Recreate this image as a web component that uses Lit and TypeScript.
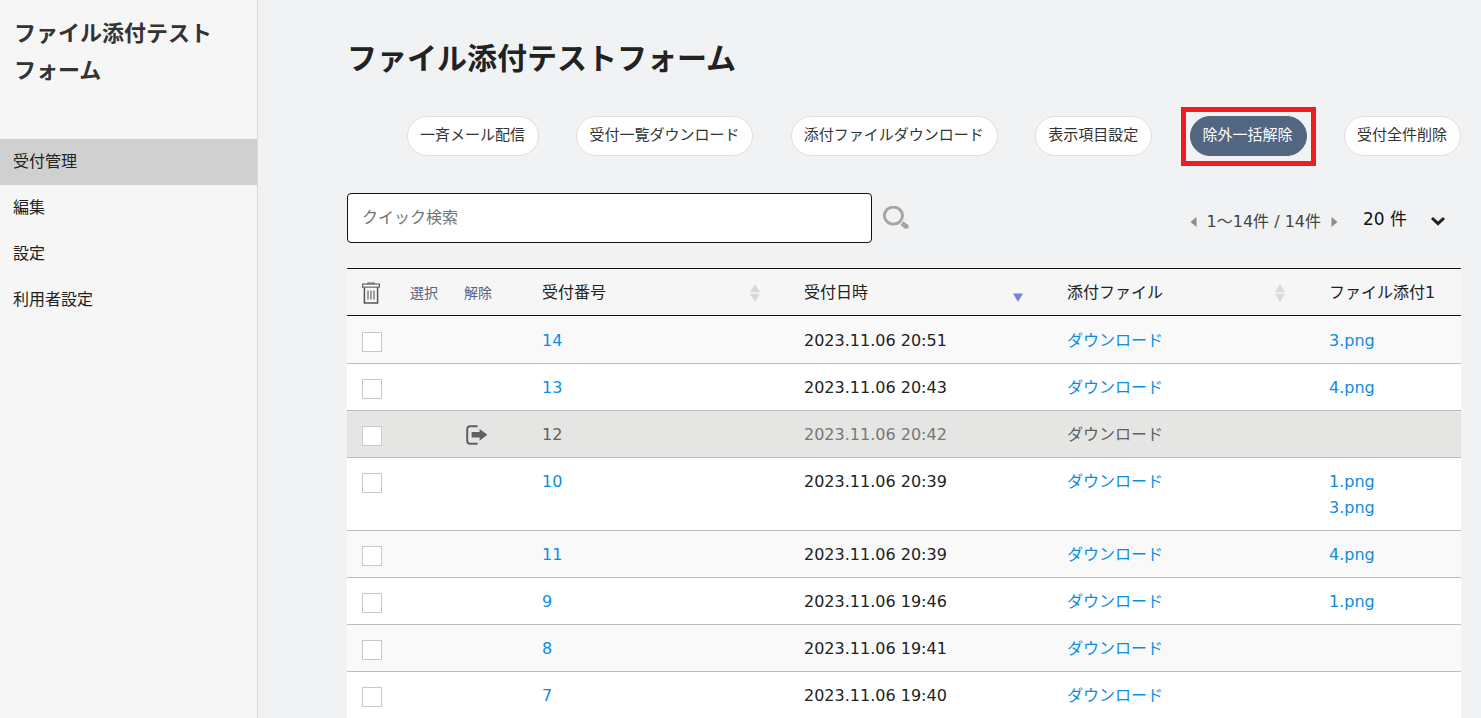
import { LitElement, html, css, svg } from "lit";
import { customElement } from "lit/decorators.js";
import { classMap } from "lit/directives/class-map.js";

interface Entry {
  id: number;
  date: string;
  files: string[];
  excluded?: boolean;
  shaded?: boolean;
}

const ENTRIES: Entry[] = [
  { id: 14, date: "2023.11.06 20:51", files: ["3.png"], shaded: true },
  { id: 13, date: "2023.11.06 20:43", files: ["4.png"] },
  { id: 12, date: "2023.11.06 20:42", files: [], excluded: true },
  { id: 10, date: "2023.11.06 20:39", files: ["1.png", "3.png"] },
  { id: 11, date: "2023.11.06 20:39", files: ["4.png"], shaded: true },
  { id: 9, date: "2023.11.06 19:46", files: ["1.png"] },
  { id: 8, date: "2023.11.06 19:41", files: [], shaded: true },
  { id: 7, date: "2023.11.06 19:40", files: [] },
];

const MENU = ["受付管理", "編集", "設定", "利用者設定"];

const ACTIONS = [
  "一斉メール配信",
  "受付一覧ダウンロード",
  "添付ファイルダウンロード",
  "表示項目設定",
  "除外一括解除",
  "受付全件削除",
];

const trashIcon = html`<svg width="18" height="22" viewBox="0 0 18 22" fill="none" stroke="#555">
  <path d="M6 2.2V1h6v1.2" stroke-width="1.2" />
  <rect x="0.6" y="2.1" width="16.8" height="3" fill="#fff" stroke-width="1.1" />
  <path d="M2.4 5.2V20.9h13.2V5.2" stroke-width="1.5" />
  <path d="M6 8.5v9M9 8.5v9M12 8.5v9" stroke-width="1.1" />
</svg>`;

const searchIcon = html`<svg width="28" height="24" viewBox="0 0 28 24" fill="none" stroke="#a5a5a5">
  <ellipse cx="11.4" cy="9.6" rx="9.1" ry="8.5" stroke-width="2.9" />
  <path d="M20 17l4 3.6" stroke-width="4.8" />
  <circle cx="24.3" cy="20.4" r="2.4" fill="#a5a5a5" stroke="none" />
</svg>`;

const releaseIcon = html`<svg width="22" height="20" viewBox="0 0 22 20">
  <path d="M11.6 1.2H4.2Q1.2 1.2 1.2 4.2V15.8Q1.2 18.8 4.2 18.8H11.6" fill="none" stroke="#606060" stroke-width="2" />
  <path d="M5.6 7H13.6V3.9L21.4 9.8L13.6 15.7V12.6H5.6Z" fill="#606060" />
</svg>`;

const sortIcon = (active: boolean) =>
  html`<svg width="10" height="18" viewBox="0 0 10 18">
    ${active
      ? svg`<path d="M0 9.5H10L5 18Z" fill="#7a80de" />`
      : svg`<path d="M5 0L10 8.2H0Z" fill="#d9d9d9" /><path d="M0 9.8H10L5 18Z" fill="#d9d9d9" />`}
  </svg>`;

@customElement("app-root")
export class AppRoot extends LitElement {
  static styles = css`
    :host {
      display: flex;
      height: 100vh;
      overflow: hidden;
      background: #f0f2f4;
      color: #222;
      font-family: "DejaVu Sans", "Noto Sans CJK JP", sans-serif;
      font-size: 16px;
      line-height: 26px;
    }
    * {
      box-sizing: border-box;
    }
    button,
    input,
    select {
      font: inherit;
      color: inherit;
    }
    button {
      padding: 0;
      border: 0;
      background: none;
      cursor: pointer;
    }
    a {
      color: #0c8ce4;
      text-decoration: none;
    }
    svg {
      display: block;
    }
    .sidebar {
      flex: none;
      width: 258px;
      background: #f6f6f6;
      border-right: 1px solid #d9dadd;
    }
    .brand {
      margin: 0;
      height: 139px;
      padding: 15px 40px 0 14px;
      font-size: 22px;
      line-height: 37px;
      color: #333;
    }
    .menu {
      margin: 0;
      padding: 0;
      list-style: none;
    }
    .menu-link {
      display: block;
      padding: 10px 13px;
      color: #222;
    }
    .menu-link.current {
      background: #d0d0d0;
    }
    .main {
      flex: 1;
      min-width: 0;
      padding: 37px 20px 0 89px;
    }
    .title {
      margin: 0;
      font-size: 30px;
      line-height: 44px;
    }
    .actions {
      display: flex;
      justify-content: space-between;
      margin-top: 35px;
      padding-left: 60px;
    }
    .action {
      position: relative;
      height: 40px;
      padding: 0 13px 3px 12px;
      border: 1px solid #dedede;
      border-radius: 20px;
      background: #fff;
      font-size: 15px;
      white-space: nowrap;
      color: #333;
    }
    .action.marked {
      background: #526581;
      border-color: #526581;
      color: #fff;
    }
    .action.marked::after {
      content: "";
      position: absolute;
      inset: -10px -10px -11px;
      border: 5px solid #ee1c25;
    }
    .tools {
      display: flex;
      align-items: center;
      margin-top: 37px;
      height: 50px;
    }
    .search {
      flex: 0 1 525px;
      min-width: 0;
      height: 50px;
      padding: 0 14px 2px;
      border: 1px solid #111;
      border-radius: 4px;
      background: #fff;
      outline: 0;
    }
    .search::placeholder {
      color: #757575;
      opacity: 1;
    }
    .search-button {
      margin-left: 10px;
    }
    .pager {
      display: flex;
      align-items: center;
      gap: 10px;
      margin-left: auto;
      padding-top: 8px;
      color: #444;
    }
    .page-size {
      position: relative;
      margin-left: 25px;
      padding-top: 2px;
    }
    .page-select {
      display: block;
      width: 98px;
      height: 30px;
      padding: 0;
      border: 0;
      background: none;
      appearance: none;
      font-size: 17px;
      color: #111;
    }
    .chevron {
      position: absolute;
      right: 15px;
      top: 14px;
      pointer-events: none;
    }
    .list {
      width: 100%;
      margin-top: 25px;
      border-collapse: separate;
      border-spacing: 0;
      table-layout: fixed;
    }
    .w-check {
      width: 49px;
    }
    .w-select {
      width: 54px;
    }
    .w-release {
      width: 77px;
    }
    .w-data {
      width: 262px;
    }
    .w-date {
      width: 263px;
    }
    th {
      height: 48px;
      padding: 2px 0 0 15px;
      border-top: 1px solid #111;
      border-bottom: 1px solid #111;
      background: #f6f6f6;
      font-weight: 400;
      text-align: left;
      white-space: nowrap;
    }
    td {
      padding: 11px 0 9px 15px;
      border-bottom: 1px solid #bcbcbc;
      background: #fff;
      vertical-align: top;
    }
    tr:first-child td {
      padding-top: 12px;
    }
    .shaded td {
      background: #f9f9f9;
    }
    .excluded td {
      background: #e5e5e3;
      color: #777;
    }
    .excluded a {
      color: #606060;
    }
    .head {
      display: flex;
      align-items: center;
      justify-content: space-between;
      padding-right: 29px;
    }
    .head.last {
      padding-right: 0;
    }
    .bulk,
    .trash {
      display: block;
      font-size: 14px;
      color: #566484;
    }
    th.tight,
    td.tight {
      padding-left: 14px;
    }
    .check {
      display: block;
      appearance: none;
      width: 20px;
      height: 20px;
      margin: 4px 0 0;
      border: 1px solid #c8c8c8;
      background: #fff;
    }
    .release {
      display: block;
      padding: 3px 2px 0;
    }
    .file {
      display: block;
    }
  `;

  private row(entry: Entry) {
    return html`<tr class=${classMap({ shaded: !!entry.shaded, excluded: !!entry.excluded })}>
      <td><input class="check" type="checkbox" aria-label="受付番号${entry.id}" /></td>
      <td></td>
      <td class="tight">
        ${entry.excluded ? html`<button class="release" aria-label="解除">${releaseIcon}</button>` : ""}
      </td>
      <td><a href="#">${entry.id}</a></td>
      <td>${entry.date}</td>
      <td><a href="#">ダウンロード</a></td>
      <td>${entry.files.map((name) => html`<a class="file" href="#">${name}</a>`)}</td>
    </tr>`;
  }

  render() {
    return html`
      <aside class="sidebar">
        <h2 class="brand">ファイル添付テストフォーム</h2>
        <nav>
          <ul class="menu">
            ${MENU.map(
              (label, i) =>
                html`<li><a href="#" class=${classMap({ "menu-link": true, current: i === 0 })}>${label}</a></li>`,
            )}
          </ul>
        </nav>
      </aside>
      <main class="main">
        <h1 class="title">ファイル添付テストフォーム</h1>
        <div class="actions">
          ${ACTIONS.map(
            (label, i) => html`<button class=${classMap({ action: true, marked: i === 4 })}>${label}</button>`,
          )}
        </div>
        <div class="tools">
          <input class="search" type="text" placeholder="クイック検索" aria-label="クイック検索" />
          <button class="search-button" aria-label="検索">${searchIcon}</button>
          <div class="pager">
            <button aria-label="前へ">
              <svg width="7" height="10" viewBox="0 0 7 10"><path d="M6.5 0V10L0.5 5Z" fill="#8c8c8c" /></svg>
            </button>
            <span>1～14件 / 14件</span>
            <button aria-label="次へ">
              <svg width="7" height="10" viewBox="0 0 7 10"><path d="M0.5 0V10L6.5 5Z" fill="#8c8c8c" /></svg>
            </button>
          </div>
          <div class="page-size">
            <select class="page-select" aria-label="表示件数">
              <option>20 件</option>
            </select>
            <svg class="chevron" width="16" height="10" viewBox="0 0 16 10" fill="none" stroke="#222" stroke-width="3">
              <path d="M2 2L8 7.6L14 2" />
            </svg>
          </div>
        </div>
        <table class="list">
          <colgroup>
            <col class="w-check" />
            <col class="w-select" />
            <col class="w-release" />
            <col class="w-data" />
            <col class="w-date" />
            <col class="w-data" />
            <col />
          </colgroup>
          <thead>
            <tr>
              <th><button class="trash" aria-label="削除">${trashIcon}</button></th>
              <th class="tight"><button class="bulk">選択</button></th>
              <th class="tight"><button class="bulk">解除</button></th>
              <th><div class="head">受付番号${sortIcon(false)}</div></th>
              <th><div class="head">受付日時${sortIcon(true)}</div></th>
              <th><div class="head">添付ファイル${sortIcon(false)}</div></th>
              <th><div class="head last">ファイル添付1</div></th>
            </tr>
          </thead>
          <tbody>
            ${ENTRIES.map((entry) => this.row(entry))}
          </tbody>
        </table>
      </main>
    `;
  }
}
